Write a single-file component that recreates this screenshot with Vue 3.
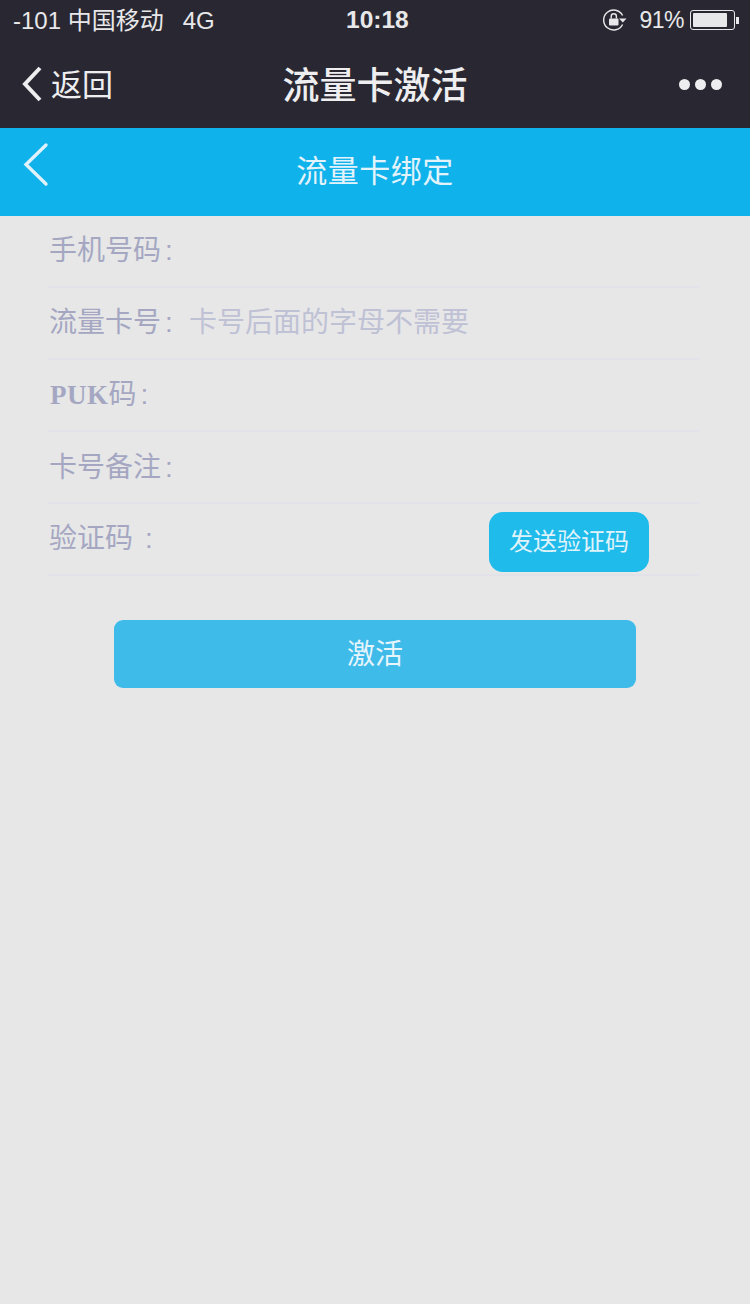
<template>
  <div class="page">
    <!-- 状态栏 -->
    <div class="statusBar">
      <div class="statusLeft">
        <span>-101 中国移动</span>
        <span>4G</span>
      </div>
      <div class="time">10:18</div>
      <div class="statusRight">
        <svg class="lockIcon" width="24" height="22" viewBox="0 0 24 22">
          <path d="M19.6 6.5 A10 10 0 1 0 19.6 15.5" fill="none" stroke="#e8e8ea" stroke-width="1.4" />
          <path d="M16 9.5 H23.5 L19.8 13.5 Z" fill="#e8e8ea" />
          <rect x="6" y="9.5" width="9.5" height="7" rx="1" fill="#e8e8ea" />
          <path d="M8.2 9.5 V7.4 A2.6 2.6 0 0 1 13.4 7.4 V9.5" fill="none" stroke="#e8e8ea" stroke-width="1.4" />
        </svg>
        <span class="percent">91%</span>
        <div class="battery"><div class="batteryFill"></div></div>
        <div class="batteryCap"></div>
      </div>
    </div>

    <!-- 微信导航栏 -->
    <div class="navBar">
      <div class="navBack">
        <svg width="24" height="38" viewBox="0 0 24 38">
          <path d="M20 3 L5 19 L20 35" fill="none" stroke="#eeeef0" stroke-width="4" />
        </svg>
        <span>返回</span>
      </div>
      <div class="navTitle">流量卡激活</div>
      <div class="navMore">
        <i></i><i></i><i></i>
      </div>
    </div>

    <!-- 页面标题 -->
    <div class="header">
      <svg class="headerBack" width="28" height="46" viewBox="0 0 28 46">
        <path d="M24 3 L4 22.5 L24 42" fill="none" stroke="#dff2fb" stroke-width="3.4" stroke-linecap="round" />
      </svg>
      <div class="headerTitle">流量卡绑定</div>
    </div>

    <!-- 表单 -->
    <div class="form">
      <div class="row">
        <span class="label">手机号码<i class="colon">:</i></span>
      </div>
      <div class="row">
        <span class="label">流量卡号<i class="colon">:</i></span>
        <span class="placeholder">卡号后面的字母不需要</span>
      </div>
      <div class="row">
        <span class="label"><b class="puk">PUK</b>码<i class="colon">:</i></span>
      </div>
      <div class="row">
        <span class="label cardNote">卡号备注<i class="colon">:</i></span>
      </div>
      <div class="row">
        <span class="label codeLabel">验证码<i class="colon wide">:</i></span>
        <button class="sendBtn"><span>发送验证码</span></button>
      </div>
    </div>

    <button class="submit"><span>激活</span></button>
  </div>
</template>

<script setup>
</script>

<style>
html, body {
  margin: 0;
  background: #e7e7e8;
}
</style>

<style scoped>
.page {
  width: 750px;
  height: 1304px;
  overflow: hidden;
  background: #e7e7e8;
  font-family: "Liberation Sans", "Noto Sans CJK SC", sans-serif;
}

/* 状态栏 */
.statusBar {
  height: 40px;
  background: #292832;
  color: #e8e8ea;
  display: flex;
  align-items: center;
  justify-content: space-between;
  padding: 0 11px 0 13px;
  font-size: 24px;
  position: relative;
}
.statusLeft {
  display: flex;
  align-items: baseline;
  gap: 19px;
  margin-top: -3px;
}
.time {
  position: absolute;
  left: 346px;
  font-weight: bold;
  font-size: 24.5px;
}
.statusRight {
  display: flex;
  align-items: center;
}
.lockIcon {
  margin-right: 12px;
}
.percent {
  font-size: 23px;
  letter-spacing: -0.5px;
  margin-right: 6px;
}
.battery {
  width: 39px;
  height: 14px;
  border: 1px solid #e8e8ea;
  border-radius: 3px;
  padding: 2px;
  box-sizing: content-box;
  display: flex;
}
.batteryFill {
  width: 34px;
  background: #e8e8ea;
  border-radius: 1px;
}
.batteryCap {
  width: 3px;
  height: 7px;
  background: #e8e8ea;
  margin-left: 1px;
}

/* 导航栏 */
.navBar {
  height: 88px;
  background: #292832;
  display: flex;
  align-items: center;
  justify-content: space-between;
  position: relative;
  color: #eeeef0;
}
.navBack {
  display: flex;
  align-items: center;
  gap: 7px;
  padding-left: 20px;
  font-size: 31px;
}
.navBack span {
  margin-top: -3px;
}
.navTitle {
  position: absolute;
  left: 0;
  right: 0;
  top: 16px;
  text-align: center;
  font-size: 37px;
  font-weight: 500;
}
.navMore {
  display: flex;
  gap: 5px;
  padding-right: 28px;
}
.navMore i {
  width: 11px;
  height: 11px;
  border-radius: 50%;
  background: #eeeef0;
}

/* 页面标题 */
.header {
  height: 88px;
  background: #0fb2ea;
  position: relative;
  display: flex;
  align-items: center;
  justify-content: center;
}
.headerBack {
  position: absolute;
  left: 22px;
  top: 14px;
}
.headerTitle {
  color: #e3f3fb;
  font-size: 31px;
  letter-spacing: 0.5px;
  margin-top: -8px;
}

/* 表单 */
.form {
  margin: 0 50px 0 48px;
}
.row {
  height: 64px;
  padding-bottom: 6px;
  border-bottom: 2px solid #e2e2e8;
  display: flex;
  align-items: center;
  position: relative;
}
.label {
  color: #a5a7c2;
  font-size: 28px;
  margin-left: 1px;
  width: 140px;
  white-space: nowrap;
}
.cardNote {
  margin-top: 2px;
}
.colon {
  font-style: normal;
  margin-left: 4px;
}
.colon.wide {
  margin-left: 12px;
}
.puk {
  font-family: "Liberation Serif", serif;
  font-weight: bold;
  font-size: 27px;
  letter-spacing: 0.5px;
  margin-left: 1px;
}
.codeLabel {
  margin-top: -1px;
}
.placeholder {
  color: #bfc1d5;
  font-size: 28px;
}
.sendBtn {
  position: absolute;
  left: 441px;
  top: 8px;
  width: 160px;
  height: 60px;
  border: none;
  border-radius: 14px;
  background: #1fbbeb;
  color: #e0f3fb;
  font-family: inherit;
  font-size: 24px;
  padding: 0 0 6px;
}
.submit {
  display: block;
  margin: 44px auto 0;
  width: 522px;
  height: 68px;
  border: none;
  border-radius: 9px;
  background: #3fbbea;
  color: #e6f5fc;
  font-family: inherit;
  font-size: 28px;
  padding: 0 0 5px;
}
</style>
